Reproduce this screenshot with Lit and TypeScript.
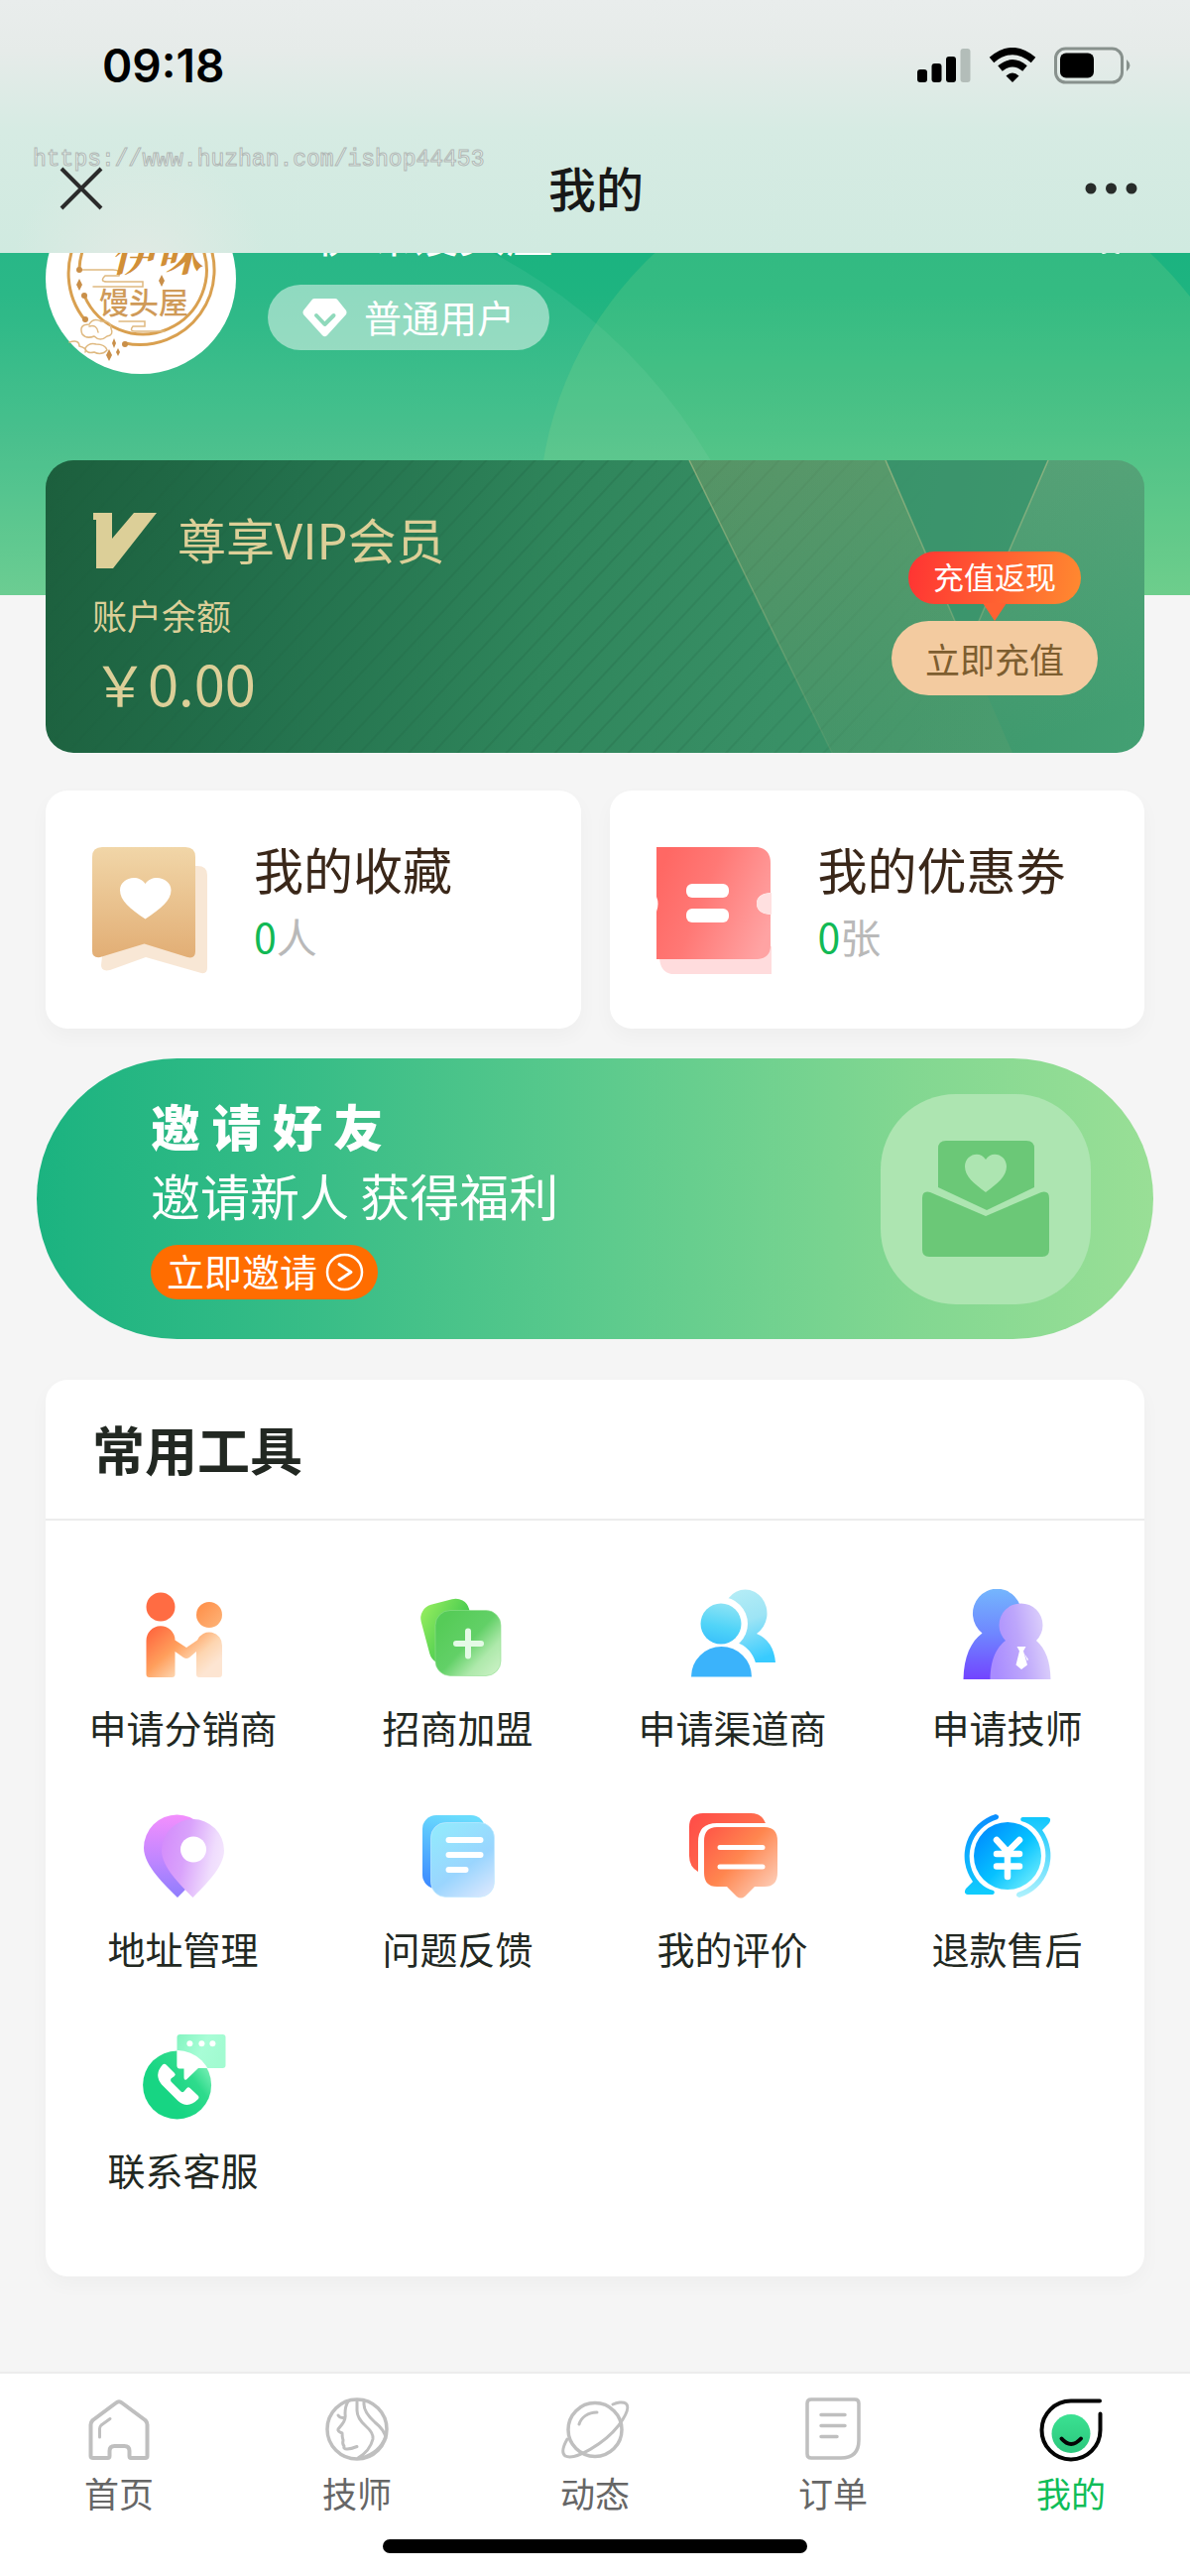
import { LitElement, html, css, svg, nothing } from "lit";
import { customElement, state } from "lit/decorators.js";
import { classMap } from "lit/directives/class-map.js";

const toolIcons = {
  distributor: svg`
    <defs>
      <linearGradient id="dist" x1="0.05" y1="0.1" x2="0.9" y2="0.75">
        <stop offset="0" stop-color="#ff6a40"/><stop offset="0.42" stop-color="#ff9f5c"/>
        <stop offset="0.75" stop-color="#fdd5b0"/><stop offset="1" stop-color="#fde5d2"/>
      </linearGradient>
      <linearGradient id="distHead" x1="0" y1="0" x2="1" y2="1">
        <stop offset="0" stop-color="#ff8c45"/><stop offset="1" stop-color="#fdb57a"/>
      </linearGradient>
    </defs>
    <circle cx="23" cy="18" r="14.500" fill="#ff6c43"/>
    <circle cx="72" cy="26" r="13" fill="url(#distHead)"/>
    <path fill="url(#dist)" d="M8.500 86V52a14.500 14.500 0 0 1 29-.5L49 59l11-7.500A13 13 0 0 1 85 57v29q0 3-3 3H62q-3 0-3-3V63l-7 6q-3 2-6 0l-8.500-6v23q0 3-3 3h-23q-3 0-3-3z"/>`,
  franchise: svg`
    <defs>
      <linearGradient id="frBack" x1="0" y1="0" x2="0.7" y2="0.8">
        <stop offset="0" stop-color="#9bf060"/><stop offset="1" stop-color="#34c24c"/>
      </linearGradient>
      <linearGradient id="frFront" x1="0.15" y1="0.15" x2="0.95" y2="0.9">
        <stop offset="0" stop-color="#56cc58"/><stop offset="0.45" stop-color="#62d067"/>
        <stop offset="0.75" stop-color="#aee9ab"/><stop offset="1" stop-color="#c6f0c1"/>
      </linearGradient>
    </defs>
    <rect x="12" y="12" width="50" height="61" rx="14" fill="url(#frBack)" transform="rotate(-15 37 42)"/>
    <rect x="23" y="21.500" width="66" height="66" rx="15" fill="url(#frFront)" stroke="#8fe08d" stroke-opacity="0.6"/>
    <path d="M56 42.500v25M44 55h25" stroke="#e4fae6" stroke-width="6" stroke-linecap="round"/>`,
  channel: svg`
    <defs>
      <linearGradient id="chBack" x1="0.3" y1="0" x2="0.6" y2="1">
        <stop offset="0" stop-color="#b5edf6"/><stop offset="0.45" stop-color="#9de4f5"/><stop offset="1" stop-color="#38cbff"/>
      </linearGradient>
      <linearGradient id="chHead" x1="0.6" y1="0" x2="0.4" y2="1">
        <stop offset="0" stop-color="#8ce3f5"/><stop offset="0.6" stop-color="#4fd3f8"/><stop offset="1" stop-color="#3ac1fb"/>
      </linearGradient>
    </defs>
    <path fill="url(#chBack)" d="M30 74A28 32 0 0 1 47 45A22 24 0 1 1 70 45Q87 52 89 74z"/>
    <g fill="#fff"><circle cx="34" cy="35" r="27"/><path d="M-1 92C0 40 66 40 70 80L72 92z"/></g>
    <circle cx="34" cy="35" r="20.500" fill="url(#chHead)"/>
    <path fill="#3bb3fb" d="M4 88.500A30.500 30.500 0 0 1 65 88.500z"/>`,
  technician: svg`
    <defs>
      <linearGradient id="teBack" x1="0.4" y1="0" x2="0.4" y2="1">
        <stop offset="0" stop-color="#74b6fd"/><stop offset="0.5" stop-color="#6f86ff"/><stop offset="1" stop-color="#7244ff"/>
      </linearGradient>
      <linearGradient id="teFront" x1="0.05" y1="0.7" x2="0.95" y2="0.5">
        <stop offset="0" stop-color="#a98cff"/><stop offset="0.5" stop-color="#bda6fb"/><stop offset="1" stop-color="#dcd0fb"/>
      </linearGradient>
    </defs>
    <path fill="url(#teBack)" d="M1.500 91C2 68 9 53 20.500 44.500A24.500 25 0 1 1 51 44L66 91z"/>
    <path fill="url(#teFront)" d="M28.500 91C29 70 35 59 44 52A22 22 0 1 1 75 52Q89 64 89.500 91z"/>
    <path fill="#fff" d="M55.500 58h9l-2.500 4.500 4 14-6 4.500-5.500-4.500 3.500-14zM63 65l4 6-1 1.500z"/>`,
  address: svg`
    <defs>
      <linearGradient id="adBack" x1="0.5" y1="0" x2="0.5" y2="1">
        <stop offset="0" stop-color="#f38ffd"/><stop offset="0.55" stop-color="#bf86ff"/><stop offset="1" stop-color="#8f7dfd"/>
      </linearGradient>
      <linearGradient id="adFront" x1="0" y1="0.3" x2="0.95" y2="0.55">
        <stop offset="0" stop-color="#d48dfb"/><stop offset="0.4" stop-color="#d9a2fb"/><stop offset="0.85" stop-color="#efdcfd"/><stop offset="1" stop-color="#f3e4fd"/>
      </linearGradient>
    </defs>
    <path fill="url(#adBack)" d="M40 88C28 76 6 56 6 38A33.500 33.500 0 0 1 73 38C73 56 52 76 40 88z"/>
    <path fill="url(#adFront)" d="M55.500 88C44 76 24 58 24 40.500A31.500 31.500 0 0 1 87 40.500C87 58 67 76 55.500 88z"/>
    <circle cx="56" cy="39.500" r="13" fill="#fff"/>`,
  feedback: svg`
    <defs>
      <linearGradient id="feBack" x1="0.5" y1="0" x2="0.3" y2="1">
        <stop offset="0" stop-color="#6adcfd"/><stop offset="1" stop-color="#3d8bff"/>
      </linearGradient>
      <linearGradient id="feFront" x1="0.3" y1="0" x2="0.9" y2="1">
        <stop offset="0" stop-color="#93e8fd"/><stop offset="0.55" stop-color="#9ad5fe"/><stop offset="1" stop-color="#dbe8fe"/>
      </linearGradient>
    </defs>
    <rect x="10" y="5" width="63" height="74" rx="14" fill="url(#feBack)"/>
    <rect x="18.500" y="12.500" width="64" height="75" rx="15" fill="url(#feFront)" stroke="#c3e9ff" stroke-opacity="0.7"/>
    <path d="M36.500 30h32M36.500 45h32M36.500 60h17" stroke="#fff" stroke-width="6" stroke-linecap="round"/>`,
  review: svg`
    <defs>
      <linearGradient id="reBack" x1="0" y1="0" x2="1" y2="0.6">
        <stop offset="0" stop-color="#ff4b47"/><stop offset="1" stop-color="#ff7a4f"/>
      </linearGradient>
      <linearGradient id="reFront" x1="0" y1="0" x2="0.95" y2="0.85">
        <stop offset="0" stop-color="#ff5547"/><stop offset="0.5" stop-color="#ff864f"/><stop offset="1" stop-color="#fdccb5"/>
      </linearGradient>
    </defs>
    <path fill="url(#reBack)" d="M16 3H64Q75 3 79 13H30Q11 13 11 32V62Q2 57 2 46V17Q2 3 16 3z"/>
    <path fill="url(#reFront)" d="M30 17H78Q91 17 91 31V63Q91 77 78 77H68L58 87Q54 90 50 87L40 77H30Q17 77 17 63V31Q17 17 30 17z"/>
    <path d="M33 37.500h43M33 57h43" stroke="#fff" stroke-width="5" stroke-linecap="round"/>`,
  refund: svg`
    <defs>
      <linearGradient id="rfDisc" x1="0.15" y1="0.1" x2="0.9" y2="0.85">
        <stop offset="0" stop-color="#0090ff"/><stop offset="0.55" stop-color="#06c2ff"/><stop offset="1" stop-color="#63e8fd"/>
      </linearGradient>
      <linearGradient id="rfLeft" x1="0.5" y1="0" x2="0.5" y2="1">
        <stop offset="0" stop-color="#0a8dff"/><stop offset="1" stop-color="#10cdfd"/>
      </linearGradient>
      <linearGradient id="rfRight" x1="0.5" y1="0" x2="0.5" y2="1">
        <stop offset="0" stop-color="#0fc6fd"/><stop offset="1" stop-color="#b0f2fd"/>
      </linearGradient>
    </defs>
    <circle cx="46" cy="46" r="34" fill="url(#rfDisc)"/>
    <path fill="url(#rfLeft)" d="M34 4A44 44 0 0 0 11 72L4 79Q1 84 6 85H31Q34 84 32 81Q24 79 18 73A39 39 0 0 1 36 9Q39 5 34 4z"/>
    <path fill="url(#rfRight)" d="M58 88A44 44 0 0 0 81 20L88 13Q91 8 86 7H61Q58 8 60 11Q68 13 74 19A39 39 0 0 1 56 83Q53 87 58 88z"/>
    <path d="M35 30l11 12 12-12M46 42v25M35 44h23M35 56.500h23" stroke="#fff" stroke-width="6.500" stroke-linecap="round" stroke-linejoin="round" fill="none"/>`,
  service: svg`
    <defs>
      <linearGradient id="seDisc" x1="0.35" y1="0.65" x2="0.95" y2="0.2">
        <stop offset="0" stop-color="#17d583"/><stop offset="0.6" stop-color="#2edb8c"/><stop offset="1" stop-color="#7df0b8"/>
      </linearGradient>
      <linearGradient id="seBubble" x1="0" y1="0" x2="1" y2="0.3">
        <stop offset="0" stop-color="#83f4c0"/><stop offset="0.6" stop-color="#a8fdd6"/><stop offset="1" stop-color="#a2fbd1"/>
      </linearGradient>
      <clipPath id="seClip"><circle cx="39.600" cy="54" r="35"/></clipPath>
    </defs>
    <circle cx="39.600" cy="54" r="34.500" fill="url(#seDisc)"/>
    <rect x="39.500" y="3" width="49" height="34" rx="3" fill="url(#seBubble)"/>
    <path clip-path="url(#seClip)" fill="#fff" d="M39.500 3H89V37H61L49 48.500q-2.500 1-2.500-2V37.500H42q-2.500 0-2.500-3z"/>
    <g fill="#fff"><circle cx="52.400" cy="12.300" r="3"/><circle cx="64.400" cy="12.300" r="3"/><circle cx="75.400" cy="12.300" r="3"/>
    <path d="M25 33.500q2-1.500 4 .5l8 8q1.500 1.500 0 3l-3.500 2.500q-1 1.500 0 3l10 10q1.500 1.500 3 0l3-3.500q1.500-1.500 3 0l8 7.500q2 2 0 4-10 10-20 1.500L24 53.500q-8-10 1-20z"/></g>`,
};

const tabIcons = {
  home: svg`<g fill="none" stroke="#bfbfbf" stroke-width="4" stroke-linejoin="round" stroke-linecap="round">
    <path d="M33 9.500q3-2.500 6 0L62.500 27q2 2 2 4.500V63q0 2-2 2H48q-1.500 0-1.500-2V58q0-5-5-5h-10q-5 0-5 5v5q0 2-2 2H10q-2.500 0-2.500-2V31.500Q7.500 29 9.500 27z"/>
    <path stroke-width="3" d="M27 25.500L18 32q-1.500 1.500-1.500 3.500V44"/></g>`,
  technician: svg`<g fill="none" stroke="#bfbfbf" stroke-width="3" stroke-linejoin="round" stroke-linecap="round">
    <circle cx="36" cy="36" r="30" stroke-width="3.500"/>
    <path d="M27 8q-3 5-3 12 1 6-3 11l-4 5q-1 2 4 4 0 4 1 7-1 4 1 6-1 3 3 3 4 0 10-2.500M17 22q2 3 6 2.500M36 7v10q0 8 9 16 8 7 7 13-3 12-15 19M43 7v4q0 8 11 18 10 8 11 16M65 43Q59 60 40 65"/></g>`,
  moments: svg`<g fill="none" stroke="#bfbfbf" stroke-width="3" stroke-linejoin="round" stroke-linecap="round">
    <circle cx="36" cy="36.500" r="27" stroke-width="3.500"/>
    <path d="M8 46C4 53 2 60 6 63C16 68 46 50 60 32C68 21 71 13 67 10C64 8 58 9 54 11M20 31C22 24 29 19 38 19"/></g>`,
  orders: svg`<g fill="none" stroke="#bfbfbf" stroke-width="3.500" stroke-linejoin="round" stroke-linecap="round">
    <path d="M14 6H58q4 0 4 4V47q0 18-18 18H14q-4 0-4-4V10q0-4 4-4zM24 21.500H48M24 32.500H48M24 43.500H40"/></g>`,
  mine: svg`<defs><linearGradient id="mineFace" x1="0" y1="0" x2="0" y2="1">
      <stop offset="0" stop-color="#3be192"/><stop offset="1" stop-color="#2bc77c"/></linearGradient></defs>
    <circle cx="36" cy="40.500" r="19.500" fill="url(#mineFace)"/>
    <g fill="none" stroke="#050505" stroke-width="4" stroke-linecap="round">
    <path d="M65 7.500H36.500A29.500 29.500 0 1 0 65.500 37V20.500"/><path d="M26.500 45.500q9.500 11 19.500 0"/></g>`,
};

const tools = [
  { label: "申请分销商", icon: toolIcons.distributor },
  { label: "招商加盟", icon: toolIcons.franchise },
  { label: "申请渠道商", icon: toolIcons.channel },
  { label: "申请技师", icon: toolIcons.technician },
  { label: "地址管理", icon: toolIcons.address },
  { label: "问题反馈", icon: toolIcons.feedback },
  { label: "我的评价", icon: toolIcons.review },
  { label: "退款售后", icon: toolIcons.refund },
  { label: "联系客服", icon: toolIcons.service },
];

const tabs = [
  { label: "首页", icon: tabIcons.home },
  { label: "技师", icon: tabIcons.technician },
  { label: "动态", icon: tabIcons.moments },
  { label: "订单", icon: tabIcons.orders },
  { label: "我的", icon: tabIcons.mine },
];

@customElement("app-root")
export class AppRoot extends LitElement {
  @state() private activeTab = "我的";

  static styles = css`
    :host {
      display: block;
      font-family: "Noto Sans CJK SC", "Noto Sans", sans-serif;
      color: #222822;
    }
    * { box-sizing: border-box; }
    svg { display: block; flex: none; }
    a { color: inherit; text-decoration: none; }
    button { border: 0; padding: 0; margin: 0; background: none; font: inherit; color: inherit; cursor: pointer; }
    h1, h2, p { margin: 0; font-weight: 400; }

    .page { display: flex; flex-direction: column; min-height: 100vh; background: #f5f5f5; }

    .top {
      position: relative;
      z-index: 1;
      height: 255px;
      background:
        radial-gradient(circle at 142px 275px, rgba(228, 234, 229, 0.9), rgba(228, 234, 229, 0) 130px),
        linear-gradient(180deg, #e9edec 0, #e6ebe9 20%, #d6ebe3 52%, #d0eae0 100%);
    }
    .status { display: flex; align-items: center; justify-content: space-between; height: 132px; padding: 0 60px 0 103px; }
    .time { font-family: Inter, sans-serif; font-weight: 600; font-size: 46px; line-height: 56px; color: #000; }
    .status-icons { display: flex; gap: 18px; align-items: center; }
    .nav { display: grid; grid-template-columns: 1fr auto 1fr; align-items: center; height: 116px; padding: 0 52px 0 54px; }
    .title { padding-bottom: 4px; font-weight: 500; font-size: 48px; line-height: 64px; color: #181818; }
    .more { justify-self: end; }
    .watermark {
      position: absolute;
      left: 33px;
      top: 147px;
      font-family: "Liberation Mono", monospace;
      font-size: 23px;
      line-height: 28px;
      color: #e9f2ee;
      -webkit-text-stroke: 1px #b0b8b5;
    }

    .hero { position: relative; height: 345px; overflow: hidden; background: linear-gradient(180deg, #1bb380 0%, #1eb480 12%, #3fbd86 55%, #63ca8c 100%); }
    .hero-art { position: absolute; inset: 0; width: 100%; height: 100%; }
    .profile { position: relative; display: flex; align-items: flex-start; gap: 32px; margin-top: -70px; padding: 0 46px; }
    .info { display: flex; flex-direction: column; align-items: flex-start; gap: 24px; margin-top: 22px; flex: 1; }
    .name { padding-left: 48px; font-size: 48px; line-height: 52px; margin-bottom: 4px; color: #fff; }
    .level {
      display: flex; align-items: center; gap: 17px; height: 66px; padding: 0 35px;
      border-radius: 33px; background: rgba(255, 255, 255, 0.48); color: #fff; font-size: 38px; line-height: 56px;
    }
    .level-text { padding-bottom: 3px; }
    .gear { margin-top: 22px; margin-right: 10px; }

    .vip {
      position: relative; display: flex; justify-content: space-between; align-items: flex-start;
      min-height: 295px; margin: -136px 46px 0; padding: 53px 47px 0; border-radius: 28px; overflow: hidden;
      background: linear-gradient(100deg, #1c5f3d 0%, #23704c 22%, #2f855b 46%, #388f65 66%, #43a073 100%);
      color: #dccf98;
    }
    .vip-art { position: absolute; inset: 0; width: 100%; height: 100%; }
    .vip-main, .vip-side { position: relative; display: flex; flex-direction: column; }
    .vip-title { display: flex; align-items: flex-start; gap: 21px; height: 56px; font-size: 49px; line-height: 52px; }
    .vip-label { margin-top: 23px; font-size: 35px; line-height: 48px; }
    .vip-amount { margin-top: 12px; font-size: 56px; line-height: 64px; }
    .vip-side { align-items: center; gap: 17px; margin-top: 39px; }
    .tip {
      position: relative; height: 53px; padding: 0 25px; border-radius: 27px; color: #fff;
      font-size: 31px; line-height: 50px; background: linear-gradient(100deg, #ff3333, #ff8a30);
    }
    .tip::after {
      content: ""; position: absolute; left: 50%; top: 52px; margin-left: -12px;
      border: 12px solid transparent; border-top: 18px solid #ff6132; border-bottom: 0;
    }
    .recharge { height: 75px; padding: 0 34px; border-radius: 38px; background: #f3cba0; color: #7d5e30; font-size: 35px; line-height: 70px; }

    .stats { display: grid; grid-template-columns: 1fr 1fr; gap: 29px; margin: 38px 46px 0; }
    .stat {
      display: flex; align-items: flex-start; gap: 47px; min-height: 240px; padding: 57px 0 0 47px;
      border-radius: 22px; background: #fff; box-shadow: 0 8px 20px rgba(0, 0, 0, 0.03);
    }
    .stat-text { display: flex; flex-direction: column; gap: 23px; }
    .stat-title { font-size: 50px; line-height: 42px; color: #3a2719; white-space: nowrap; }
    .stat-count { font-size: 41px; line-height: 48px; color: #b9b9b9; }
    .stat-num { color: #12b955; }

    .banner {
      display: flex; justify-content: space-between; align-items: flex-start; min-height: 283px;
      margin: 30px 37px 0; padding: 36px 63px 0 115px; border-radius: 142px; color: #fff;
      background: linear-gradient(90deg, #1bb380 0%, #38bd87 25%, #5ecb8d 52%, #82d791 78%, #99df96 100%);
    }
    .banner-text { display: flex; flex-direction: column; align-items: flex-start; }
    .banner-title { font-weight: 900; font-size: 50px; line-height: 62px; }
    .banner-sub { margin-top: 9px; font-size: 50px; line-height: 60px; }
    .invite {
      display: flex; align-items: center; gap: 8px; height: 55px; margin-top: 21px; padding: 0 14px 0 16px;
      border-radius: 28px; background: #ff6d00; font-size: 38px; line-height: 50px;
    }
    .invite-text { padding-bottom: 4px; }

    .tools { margin: 41px 46px 0; border-radius: 22px; background: #fff; box-shadow: 0 8px 20px rgba(0, 0, 0, 0.03); }
    .tools-title { padding: 33px 47px 35px; border-bottom: 2px solid #ececec; font-weight: 700; font-size: 53px; line-height: 72px; }
    .grid { display: grid; grid-template-columns: repeat(4, 1fr); row-gap: 59px; padding: 69px 0 83px; }
    .tool { display: flex; flex-direction: column; align-items: center; gap: 22px; font-size: 38px; line-height: 50px; }

    .tabbar { margin-top: auto; border-top: 2px solid #ececec; background: #fff; }
    .tabs { display: grid; grid-template-columns: repeat(5, 1fr); padding-top: 20px; }
    .tab { display: flex; flex-direction: column; align-items: center; gap: 4px; font-size: 35px; line-height: 48px; color: #666; }
    .active { color: #0fbd58; }
    .home-bar { width: 428px; max-width: 60%; height: 14px; margin: 23px auto 23px; border-radius: 7px; background: #000; }
  `;

  render() {
    return html`
      <div class="page">
        <header class="top">
          <div class="status">
            <span class="time">09:18</span>
            <div class="status-icons">
              <svg width="54" height="36" viewBox="0 0 54 36">
                <rect x="0" y="22" width="10" height="13" rx="3"/><rect x="14.500" y="16" width="10" height="19" rx="3"/>
                <rect x="29" y="9" width="10" height="26" rx="3"/><rect x="43.500" y="1" width="10" height="34" rx="3" fill="#b3bdb9"/>
              </svg>
              <svg width="48" height="36" viewBox="0 0 48 36">
                <g fill="none" stroke="#000" stroke-width="7"><path d="M3 12.500Q24-5.500 45 12.500"/><path d="M11.500 21Q24 10.500 36.500 21"/></g>
                <path d="M17.500 28.500q6.500-6 13 0L24 35z"/>
              </svg>
              <svg width="77" height="38" viewBox="0 0 77 38">
                <rect x="1.500" y="2" width="67" height="34" rx="10" fill="none" stroke="#88918d" stroke-width="3"/>
                <rect x="6" y="6.500" width="34" height="25" rx="6"/><path d="M73 13q7 6 0 12z" fill="#88918d"/>
              </svg>
            </div>
          </div>
          <nav class="nav">
            <button class="close" aria-label="关闭">
              <svg width="56" height="48" viewBox="0 0 56 48"><path d="M8 4l40 40M48 4L8 44" stroke="#2b2b2b" stroke-width="4"/></svg>
            </button>
            <h1 class="title">我的</h1>
            <button class="more" aria-label="更多">
              <svg width="54" height="24" viewBox="0 0 54 24" fill="#282c2a"><circle cx="6" cy="12" r="5.500"/><circle cx="26.500" cy="12" r="5.500"/><circle cx="47" cy="12" r="5.500"/></svg>
            </button>
          </nav>
          <span class="watermark">https://www.huzhan.com/ishop44453</span>
        </header>

        <section class="hero">
          <svg class="hero-art" viewBox="0 0 1200 345" preserveAspectRatio="none" fill="#fff">
            <circle cx="238" cy="492" r="556" fill-opacity="0.06"/>
            <circle cx="910" cy="269" r="367" fill="#a6e08e" fill-opacity="0.17"/>
          </svg>
          <div class="profile">
            ${this.avatar()}
            <div class="info">
              <p class="name">伊味馒头屋</p>
              <div class="level">
                <svg width="45" height="40" viewBox="0 0 45 40"><path fill="#fff" d="M12 1h21q2 0 3 2l8 10q1 2 0 4L25 38q-2.500 2.500-5 0L1 17q-1-2 0-4L9 3q1-2 3-2z"/>
                  <path d="M14 18l8.500 9 9-9" fill="none" stroke="#8fd9bb" stroke-width="4" stroke-linecap="round" stroke-linejoin="round"/></svg>
                <span class="level-text">普通用户</span>
              </div>
            </div>
            <button class="gear" aria-label="设置">
              <svg width="48" height="50" viewBox="0 0 48 50"><path fill="#fff" fill-rule="evenodd" d="M10 3l9 3q5-4 10 0l9-3 8 12-4 10 4 10-8 9-6 5q-4 0-6-3h-4q-2 3-6 3l-6-5-8-9 4-10-4-10zM24 17a8 8 0 1 0 .1 0z"/></svg>
            </button>
          </div>
        </section>

        <section class="vip">
          ${this.vipArt()}
          <div class="vip-main">
            <div class="vip-title">
              <svg width="65" height="56" viewBox="0 0 65 56"><path fill="#dccf98" d="M1 0h19v26L42 0h23L21 56H4V7H1z"/></svg>
              <span>尊享VIP会员</span>
            </div>
            <p class="vip-label">账户余额</p>
            <p class="vip-amount">￥0.00</p>
          </div>
          <div class="vip-side">
            <span class="tip">充值返现</span>
            <button class="recharge">立即充值</button>
          </div>
        </section>

        <section class="stats">
          <a class="stat" href="#favorites">
            <svg width="116" height="128" viewBox="0 0 116 128">
              <defs><linearGradient id="fav" x1="0" y1="0" x2="0" y2="1"><stop offset="0" stop-color="#f1d6a8"/><stop offset="1" stop-color="#e2ae75"/></linearGradient></defs>
              <path fill="#f8e7d5" d="M20 19H106q10 0 10 9v94q0 6-6 5L54 111 18 124q-9 2-9-5z"/>
              <path fill="url(#fav)" d="M10 0H94q10 0 10 10v95q0 8-8 6L52.500 97.500 8 111q-8 1-8-6V10Q0 0 10 0z"/>
              <path fill="#fff" d="M53.500 72.500C38 62 28 54 28 43.500C28 31 46 26 53.500 37C61 26 79.500 31 79.500 43.500C79.500 54 69 62 53.500 72.500z"/>
            </svg>
            <div class="stat-text">
              <span class="stat-title">我的收藏</span>
              <span class="stat-count"><span class="stat-num">0</span>人</span>
            </div>
          </a>
          <a class="stat" href="#coupons">
            <svg width="116" height="128" viewBox="0 0 116 128">
              <defs><linearGradient id="cou" x1="0" y1="0.3" x2="1" y2="0.7"><stop offset="0" stop-color="#ff6864"/><stop offset="0.4" stop-color="#ff7875"/><stop offset="1" stop-color="#ffa3a3"/></linearGradient></defs>
              <path fill="#ffdcdd" d="M3 100H116V128H15Q4 126 3 112z"/>
              <path fill="url(#cou)" d="M0 0H102q13 2 13 16V46q-14 1-14 11t14 11v31q0 13-13 14H0V65q3-8 0-15z"/>
              <path fill="#ffe0e0" d="M116 46q-15 1-15 11t15 11z"/>
              <g fill="#fff"><rect x="30" y="37" width="43" height="14" rx="6"/><rect x="30" y="62" width="43" height="14" rx="6"/></g>
            </svg>
            <div class="stat-text">
              <span class="stat-title">我的优惠劵</span>
              <span class="stat-count"><span class="stat-num">0</span>张</span>
            </div>
          </a>
        </section>

        <section class="banner">
          <div class="banner-text">
            <h2 class="banner-title">邀 请 好 友</h2>
            <p class="banner-sub">邀请新人 获得福利</p>
            <button class="invite">
              <span class="invite-text">立即邀请</span>
              <svg width="39" height="39" viewBox="0 0 39 39" fill="none" stroke="#fff" stroke-width="2.500" stroke-linecap="round" stroke-linejoin="round"><circle cx="19.500" cy="19.500" r="17.500"/><path stroke-width="3" d="M14 11.500l12 8-12 8"/></svg>
            </button>
          </div>
          <svg width="212" height="212" viewBox="0 0 212 212">
            <rect width="212" height="212" rx="76" fill="#ade5b1"/>
            <g fill="#6bc877">
              <path d="M66 47h81q8 0 8 8v39l-48 23-49-23V55q0-8 8-8z"/>
              <path d="M50 99l56 24 56-24q8-2 8 6v52q0 7-7 7H49q-7 0-7-7v-52q0-8 8-6z"/>
            </g>
            <path fill="#ade5b1" d="M106 99C94 90 85 83 85 73C85 61 100 56 106 66C112 56 127 61 127 73C127 83 118 90 106 99z"/>
          </svg>
        </section>

        <section class="tools">
          <h2 class="tools-title">常用工具</h2>
          <div class="grid">
            ${tools.map((t) => html`
              <a class="tool" href="#tool"><svg width="92" height="92" viewBox="0 0 92 92">${t.icon}</svg><span>${t.label}</span></a>`)}
          </div>
        </section>

        <footer class="tabbar">
          <nav class="tabs">
            ${tabs.map((t) => html`
              <button
                class=${classMap({ tab: true, active: t.label === this.activeTab })}
                aria-current=${t.label === this.activeTab ? "page" : nothing}
                @click=${() => { this.activeTab = t.label; }}
              ><svg width="72" height="72" viewBox="0 0 72 72">${t.icon}</svg><span>${t.label}</span></button>`)}
          </nav>
          <div class="home-bar"></div>
        </footer>
      </div>
    `;
  }

  private avatar() {
    return html`
      <svg width="192" height="192" viewBox="0 0 192 192">
        <circle cx="96" cy="96" r="96" fill="#fff"/>
        <g fill="none" stroke="#d9a050" stroke-linecap="round">
          <g stroke-width="3"><path d="M40 138A75 75 0 0 1 35 50M80 161A75 75 0 0 0 160 50"/><path d="M39 113A64 64 0 1 0 157 62M34 86A64 64 0 0 1 52 44"/></g>
          <g stroke-width="1.500" stroke="#dfb980">
            <path d="M34 87h34q8 0 6 6H60q-6 6 2 6h36v5H48M74 139h26v5H88q-4 5 2 5h30"/>
            <path d="M24 160q10-3 10 4 8 2 6 6M37 152q-4-10 7-10 4-7 12-3 10-1 10 7 3 7-4 8-7 6-13 0-8 3-12-2zM44 144q8-2 9 6M40 166q4-6 11-4 9 0 11 6-6 6-13 2-8 2-9-4z"/>
          </g>
        </g>
        <g fill="#c98f49">
          <path d="M34 96l3 6-3 6-3-6zM117 92l3 6-3 6-3-6zM64 167l3 6-3 6-3-6zM69 156l2 5-2 5-2-5zM73 166l2 4-2 4-2-4z"/>
          <circle cx="34" cy="87" r="3"/><circle cx="39" cy="113" r="3"/><circle cx="40" cy="137" r="3"/><circle cx="80" cy="162" r="3"/>
        </g>
        <text x="66" y="88" font-family="Noto Serif CJK SC, Noto Sans CJK SC, serif" font-weight="700" font-style="italic" font-size="46" fill="#d18f38">伊味</text>
        <text x="54" y="131" font-family="Noto Sans CJK SC, sans-serif" font-weight="500" font-size="30" fill="#cf9a58">馒头屋</text>
      </svg>`;
  }

  private vipArt() {
    return html`
      <svg class="vip-art" viewBox="0 0 1108 295" preserveAspectRatio="none">
        <defs>
          <pattern id="stripes" width="18" height="18" patternUnits="userSpaceOnUse" patternTransform="rotate(43)">
            <rect width="2" height="18" fill="#1c5c3c" fill-opacity="0.2"/>
          </pattern>
          <linearGradient id="fadeIn" x1="0" y1="0" x2="1" y2="0">
            <stop offset="0" stop-color="#fff" stop-opacity="0.3"/><stop offset="0.5" stop-color="#fff"/>
            <stop offset="0.7" stop-color="#fff" stop-opacity="0.5"/><stop offset="0.8" stop-color="#fff" stop-opacity="0"/>
          </linearGradient>
          <mask id="stripeMask"><rect width="1108" height="295" fill="url(#fadeIn)"/></mask>
          <linearGradient id="beam" x1="0" y1="0" x2="0.3" y2="1">
            <stop offset="0" stop-color="#c4b277" stop-opacity="0.24"/><stop offset="1" stop-color="#c4b277" stop-opacity="0.08"/>
          </linearGradient>
          <linearGradient id="beamRight" x1="0" y1="0" x2="0.2" y2="1">
            <stop offset="0" stop-color="#b9bf9a" stop-opacity="0.2"/><stop offset="1" stop-color="#b9bf9a" stop-opacity="0"/>
          </linearGradient>
          <linearGradient id="edge" x1="0" y1="0" x2="0" y2="1">
            <stop offset="0" stop-color="#b5c08a" stop-opacity="0.6"/><stop offset="1" stop-color="#b5c08a" stop-opacity="0.1"/>
          </linearGradient>
        </defs>
        <rect width="1108" height="295" fill="url(#stripes)" mask="url(#stripeMask)"/>
        <path fill="#3a946d" fill-opacity="0.55" d="M847 0H1011L929 190z"/>
        <path fill="url(#beam)" d="M649 0H847L929 190L975 295H793z"/>
        <path fill="url(#beamRight)" d="M1011 0H1108V295H975L929 190z"/>
        <path fill="none" stroke="url(#edge)" stroke-width="1.500" d="M649 0L793 295M847 0L929 190L1011 0"/>
      </svg>`;
  }
}
